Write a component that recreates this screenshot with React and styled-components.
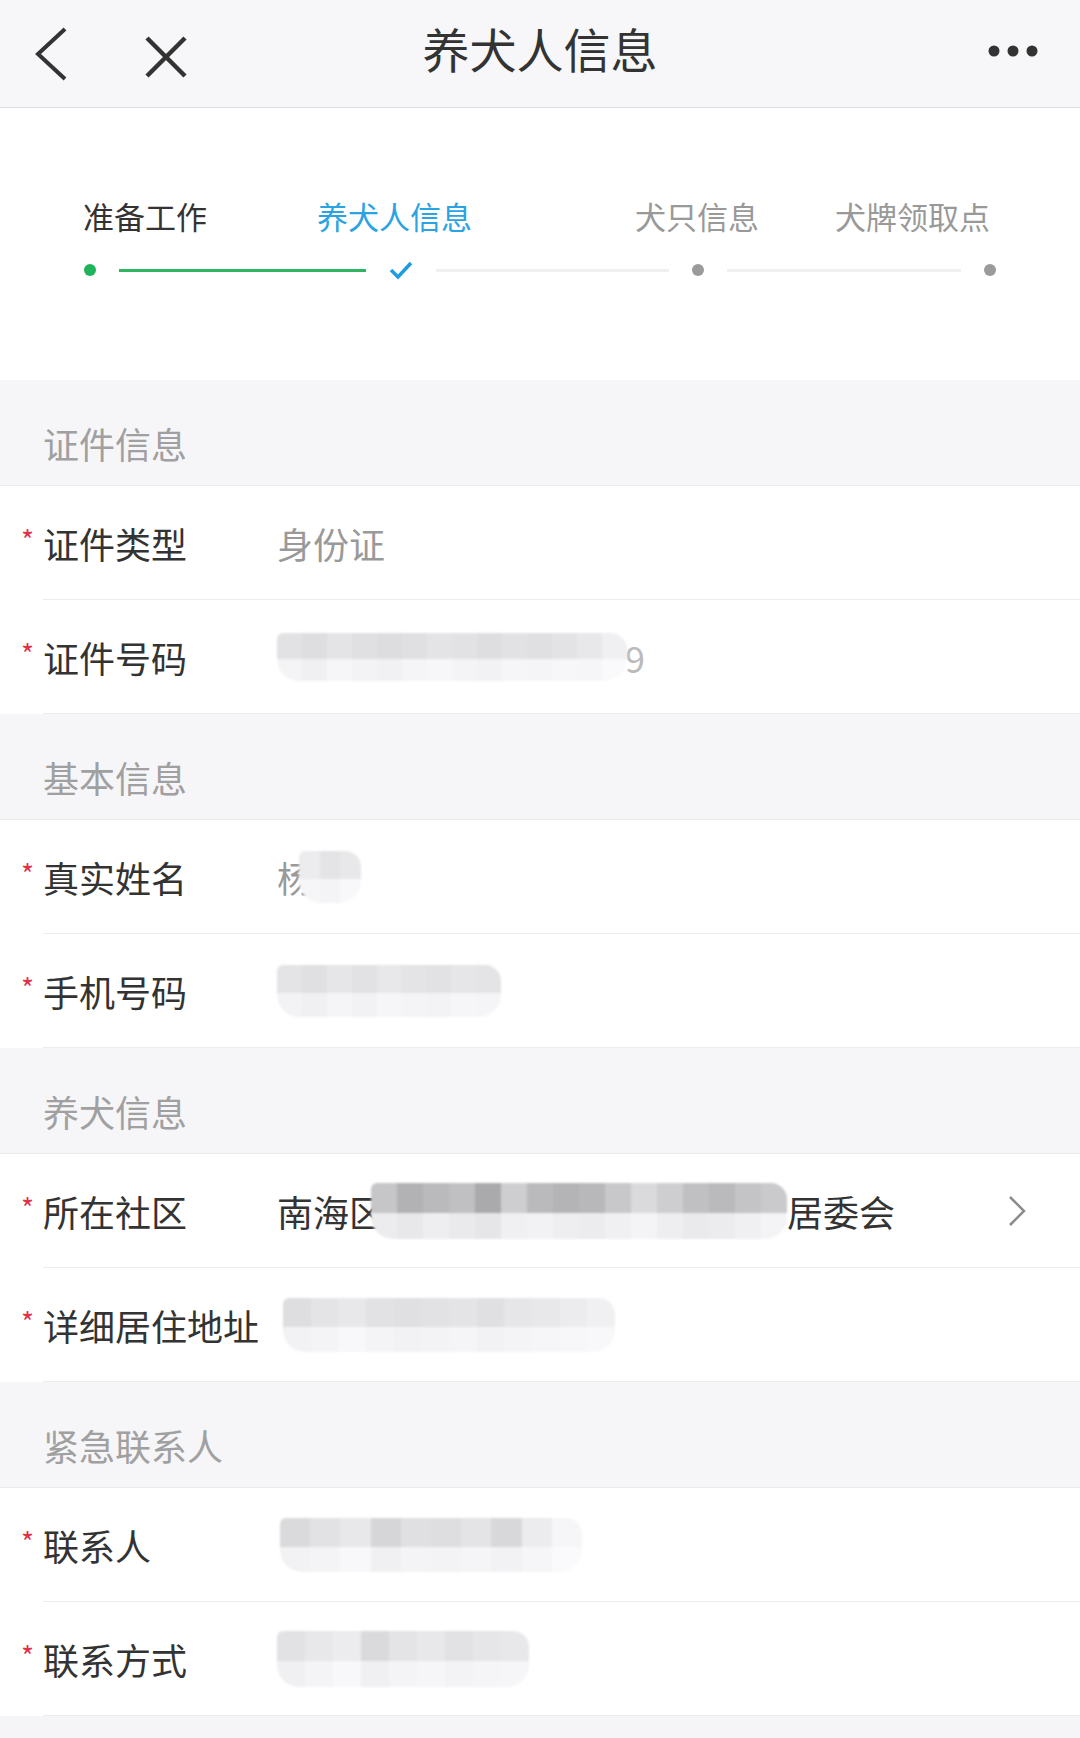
import React from 'react';
import styled, { createGlobalStyle } from 'styled-components';

const GlobalStyle = createGlobalStyle`
  *, *:before, *:after {
    box-sizing: border-box;
    margin: 0;
    padding: 0;
  }
  body {
    background: #f5f5f7;
    font-family: 'Noto Sans CJK SC', 'Noto Sans', sans-serif;
  }
`;

const Page = styled.div`
  width: 1080px;
  min-height: 1738px;
  background: #f5f5f7;
`;

const NavBar = styled.header`
  height: 108px;
  display: grid;
  grid-template-columns: 1fr auto 1fr;
  align-items: center;
  background: #f7f7f9;
  border-bottom: 1px solid #dedee0;
`;

const NavLeft = styled.div`
  display: flex;
  align-items: center;
  gap: 76px;
  padding-left: 34px;
`;

const NavRight = styled.div`
  display: flex;
  justify-content: flex-end;
  padding-right: 40px;
`;

const Title = styled.h1`
  font-size: 47px;
  font-weight: 400;
  color: #333;
  line-height: 1;
  margin-top: -12px;
`;

const IconSvg = styled.svg`
  display: block;
  margin-top: ${(p) => p.$mt || 0}px;
`;

const Steps = styled.section`
  height: 272px;
  background: #fff;
  padding-top: 88px;
`;

const StepLabels = styled.div`
  display: grid;
  grid-template-columns: 234px 318px 200px auto;
  padding-left: 83px;
  height: 40px;
  align-items: center;
`;

const StepLabel = styled.span`
  font-size: 31px;
  line-height: 40px;
  color: ${(p) => (p.$state === 'done' ? '#333' : p.$state === 'active' ? '#2ba3e3' : '#999')};
`;

const Track = styled.div`
  display: flex;
  align-items: center;
  gap: 23px;
  padding-left: 84px;
  margin-top: 24px;
  height: 20px;
`;

const Dot = styled.span`
  width: 12px;
  height: 12px;
  border-radius: 50%;
  background: ${(p) => (p.$done ? '#1fb35c' : '#9a9a9a')};
  flex: none;
`;

const Line = styled.span`
  width: ${(p) => p.$w}px;
  height: 3px;
  background: ${(p) => (p.$done ? '#2fb462' : '#f0f0f0')};
  flex: none;
`;

const SectionTitle = styled.div`
  height: 106px;
  display: flex;
  align-items: center;
  padding: 20px 0 0 43px;
  font-size: 36px;
  color: #a0a0a0;
  background: #f6f6f8;
  border-bottom: 1px solid #ebebeb;
`;

const Group = styled.div`
  background: #fff;
`;

const Row = styled.div`
  display: flex;
  height: 114px;
`;

const Star = styled.span`
  width: 43px;
  padding: 0 0 0 21px;
  color: #e2304a;
  font-size: 28px;
  line-height: 1;
  align-self: center;
  margin-top: -8px;
`;

const RowBody = styled.div`
  flex: 1;
  display: flex;
  align-items: center;
  border-bottom: 1px solid #ececec;
  padding-right: 54px;
`;

const Label = styled.span`
  width: 234px;
  flex: none;
  font-size: 36px;
  color: #333;
  white-space: nowrap;
`;

const Value = styled.div`
  flex: 1;
  display: flex;
  align-items: center;
  font-size: 36px;
  color: ${(p) => (p.$muted ? '#999' : '#333')};
  white-space: nowrap;
`;

const Chevron = styled.svg`
  display: block;
  flex: none;
`;

const MosaicBox = styled.span`
  display: inline-flex;
  flex-direction: column;
  width: ${(p) => p.$w}px;
  height: ${(p) => p.$h}px;
  margin-left: ${(p) => p.$ml || 0}px;
  border-radius: 6px 16px 22px 22px;
  overflow: hidden;
  filter: blur(1.2px);
  flex: none;
`;

const MosaicRow = styled.span`
  display: flex;
  flex: ${(p) => p.$flex};
`;

const Cell = styled.span`
  flex: 1;
  background: ${(p) => p.$shade};
`;

const grey = (v) => `rgb(${v},${v},${v + 2})`;

const Mosaic = ({ w, h, ml, top, bottom }) => (
  <MosaicBox $w={w} $h={h} $ml={ml}>
    <MosaicRow $flex={1.1}>
      {top.map((v, i) => (
        <Cell key={i} $shade={grey(v)} />
      ))}
    </MosaicRow>
    <MosaicRow $flex={0.9}>
      {bottom.map((v, i) => (
        <Cell key={i} $shade={grey(v)} />
      ))}
    </MosaicRow>
  </MosaicBox>
);

const Tail = styled.span`
  color: ${(p) => p.$color || '#333'};
  margin-left: ${(p) => p.$ml || 0}px;
`;

const BackIcon = () => (
  <IconSvg width="34" height="56" viewBox="0 0 34 56">
    <path d="M31 3 L4 28 L31 53" fill="none" stroke="#333" strokeWidth="4" strokeLinejoin="miter" />
  </IconSvg>
);

const CloseIcon = () => (
  <IconSvg width="44" height="44" viewBox="0 0 44 44" $mt={6}>
    <path d="M3 3 L41 41 M41 3 L3 41" fill="none" stroke="#333" strokeWidth="4.5" />
  </IconSvg>
);

const MoreIcon = () => (
  <IconSvg width="52" height="12" viewBox="0 0 52 12" $mt={-6}>
    <circle cx="6" cy="6" r="5.5" fill="#333" />
    <circle cx="25" cy="6" r="5.5" fill="#333" />
    <circle cx="44" cy="6" r="5.5" fill="#333" />
  </IconSvg>
);

const CheckIcon = () => (
  <IconSvg width="24" height="20" viewBox="0 0 24 20">
    <path d="M2 10 L9 17 L22 3" fill="none" stroke="#1e9ce0" strokeWidth="3.5" />
  </IconSvg>
);

const FieldRow = ({ label, children }) => (
  <Row>
    <Star>*</Star>
    <RowBody>
      <Label>{label}</Label>
      {children}
    </RowBody>
  </Row>
);

export default function App() {
  return (
    <Page>
      <GlobalStyle />
      <NavBar>
        <NavLeft>
          <BackIcon />
          <CloseIcon />
        </NavLeft>
        <Title>养犬人信息</Title>
        <NavRight>
          <MoreIcon />
        </NavRight>
      </NavBar>

      <Steps>
        <StepLabels>
          <StepLabel $state="done">准备工作</StepLabel>
          <StepLabel $state="active">养犬人信息</StepLabel>
          <StepLabel>犬只信息</StepLabel>
          <StepLabel>犬牌领取点</StepLabel>
        </StepLabels>
        <Track>
          <Dot $done />
          <Line $w={247} $done />
          <CheckIcon />
          <Line $w={233} />
          <Dot />
          <Line $w={234} />
          <Dot />
        </Track>
      </Steps>

      <SectionTitle>证件信息</SectionTitle>
      <Group>
        <FieldRow label="证件类型">
          <Value $muted>身份证</Value>
        </FieldRow>
        <FieldRow label="证件号码">
          <Value>
            <Mosaic
              w={350}
              h={48}
              top={[226, 222, 228, 224, 221, 224, 228, 226, 222, 226, 224, 227, 232, 240]}
              bottom={[244, 240, 246, 243, 241, 245, 247, 244, 242, 246, 245, 247, 246, 250]}
            />
            <Tail $color="#bbb" $ml={-2}>9</Tail>
          </Value>
        </FieldRow>
      </Group>

      <SectionTitle>基本信息</SectionTitle>
      <Group>
        <FieldRow label="真实姓名">
          <Value $muted>
            杨
            <Mosaic w={62} h={52} ml={-14} top={[236, 228, 232]} bottom={[246, 244, 248]} />
          </Value>
        </FieldRow>
        <FieldRow label="手机号码">
          <Value>
            <Mosaic
              w={224}
              h={52}
              top={[228, 224, 230, 226, 232, 228, 226, 230, 228]}
              bottom={[243, 240, 245, 242, 246, 244, 243, 246, 245]}
            />
          </Value>
        </FieldRow>
      </Group>

      <SectionTitle>养犬信息</SectionTitle>
      <Group>
        <FieldRow label="所在社区">
          <Value>
            南海区
            <Mosaic
              w={416}
              h={56}
              ml={-14}
              top={[198, 178, 186, 192, 170, 206, 186, 180, 184, 200, 218, 206, 192, 186, 196, 202]}
              bottom={[236, 232, 238, 234, 230, 240, 242, 238, 236, 240, 244, 238, 234, 236, 240, 244]}
            />
            <Tail>居委会</Tail>
          </Value>
          <Chevron width="18" height="32" viewBox="0 0 18 32">
            <path d="M2 2 L16 16 L2 30" fill="none" stroke="#8c8c8c" strokeWidth="2.5" />
          </Chevron>
        </FieldRow>
        <FieldRow label="详细居住地址">
          <Value>
            <Mosaic
              w={332}
              h={54}
              ml={6}
              top={[222, 228, 232, 226, 224, 226, 228, 224, 230, 232, 236, 240]}
              bottom={[242, 244, 248, 244, 242, 243, 245, 242, 244, 246, 247, 248]}
            />
          </Value>
        </FieldRow>
      </Group>

      <SectionTitle>紧急联系人</SectionTitle>
      <Group>
        <FieldRow label="联系人">
          <Value>
            <Mosaic
              w={302}
              h={54}
              ml={3}
              top={[218, 226, 232, 214, 224, 222, 228, 216, 236, 246]}
              bottom={[242, 244, 248, 240, 244, 243, 245, 242, 246, 250]}
            />
          </Value>
        </FieldRow>
        <FieldRow label="联系方式">
          <Value>
            <Mosaic
              w={252}
              h={56}
              top={[226, 232, 236, 218, 228, 232, 226, 230, 232]}
              bottom={[240, 244, 248, 240, 244, 246, 243, 245, 246]}
            />
          </Value>
        </FieldRow>
      </Group>
    </Page>
  );
}
